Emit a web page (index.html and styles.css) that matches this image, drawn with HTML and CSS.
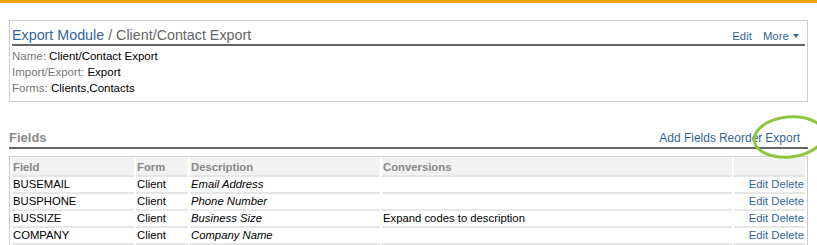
FILE: index.html
```html
<!DOCTYPE html>
<html>
<head>
    <title>Client/Contact Export</title>
    <meta charset="UTF-8">
    <link rel="stylesheet" href="styles.css">
</head>
<body>
    <div class="topbar"></div>

    <div class="panel">
        <div class="panel-head">
            <h1><a href="#">Export Module</a> / Client/Contact Export</h1>
            <div class="actions">
                <a href="#">Edit</a>
                <a href="#">More <span class="caret"></span></a>
            </div>
        </div>
        <div class="info"><span class="label">Name:</span> Client/Contact Export</div>
        <div class="info"><span class="label">Import/Export:</span> Export</div>
        <div class="info"><span class="label">Forms:</span> Clients,Contacts</div>
    </div>

    <div class="section-head">
        <h2>Fields</h2>
        <div class="actions">
            <a href="#">Add Fields</a>
            <a href="#">Reorder</a>
            <a href="#">Export</a>
        </div>
    </div>

    <table class="fields">
        <colgroup>
            <col class="c-field">
            <col class="c-form">
            <col class="c-desc">
            <col class="c-conv">
            <col class="c-act">
        </colgroup>
        <thead>
            <tr><th>Field</th><th>Form</th><th>Description</th><th>Conversions</th><th></th></tr>
        </thead>
        <tbody>
            <tr><td>BUSEMAIL</td><td>Client</td><td class="desc">Email Address</td><td></td><td class="row-links"><a href="#">Edit</a> <a href="#">Delete</a></td></tr>
            <tr><td>BUSPHONE</td><td>Client</td><td class="desc">Phone Number</td><td></td><td class="row-links"><a href="#">Edit</a> <a href="#">Delete</a></td></tr>
            <tr><td>BUSSIZE</td><td>Client</td><td class="desc">Business Size</td><td>Expand codes to description</td><td class="row-links"><a href="#">Edit</a> <a href="#">Delete</a></td></tr>
            <tr><td>COMPANY</td><td>Client</td><td class="desc">Company Name</td><td></td><td class="row-links"><a href="#">Edit</a> <a href="#">Delete</a></td></tr>
        </tbody>
    </table>

    <!-- annotation circle around the Export link -->
    <svg class="mark" width="817" height="245" viewBox="0 0 817 245">
        <ellipse cx="789" cy="137" rx="35" ry="20" transform="rotate(-6 789 137)" fill="none" stroke="#8cc63f" stroke-width="3"/>
    </svg>
</body>
</html>
```

FILE: styles.css
```css
body {
    font-family: "Liberation Sans", Arial, sans-serif;
    font-size: 11.3px;
    color: #000;
    margin: 0;
    position: relative;
}
a {
    color: #336699;
    text-decoration: none;
}
.topbar {
    height: 3px;
    background-color: #f5a300;
}
.panel {
    border: 1px solid #ccc;
    margin: 17px 9px 0 9px;
    padding: 0 2px 5px 2px;
}
.panel-head {
    display: flex;
    justify-content: space-between;
    align-items: baseline;
    border-bottom: 2px solid #666;
    padding: 5px 6px 0 0;
    margin-bottom: 2px;
}
h1 {
    font-size: 14.3px;
    font-weight: normal;
    color: #666;
    margin: 0;
    line-height: 18px;
}
.actions {
    display: flex;
    gap: 3px;
    font-size: 12px;
}
.panel-head .actions {
    gap: 11px;
    font-size: 11.4px;
}
.caret {
    display: inline-block;
    border-left: 3.5px solid transparent;
    border-right: 3.5px solid transparent;
    border-top: 4px solid #336699;
    vertical-align: 2px;
    margin-left: 1px;
}
.info {
    line-height: 16px;
    font-size: 11.5px;
}
.label {
    color: #777;
}
.section-head {
    display: flex;
    justify-content: space-between;
    align-items: baseline;
    margin: 27px 9px 0 9px;
    border-bottom: 2px solid #666;
    padding-right: 8px;
}
h2 {
    font-size: 13px;
    color: #888;
    margin: 0;
    line-height: 18px;
}
.fields {
    margin: 7px 0 0 9px;
    width: 799px;
    table-layout: fixed;
    border: 1px solid #ccc;
    border-spacing: 2px 0;
}
.c-field { width: 122px; }
.c-form { width: 52px; }
.c-desc { width: 190px; }
.c-conv { width: 350px; }
.c-act { width: 71px; }
th, td {
    text-align: left;
    padding: 0 1px;
    line-height: 15px;
    border-bottom: 2px solid #e6e6e6;
    white-space: nowrap;
    overflow: hidden;
}
th {
    background-color: #f2f2f2;
    color: #888;
    padding-top: 2px;
    border-top: 1px solid #fff;
}
.desc {
    font-style: italic;
}
.row-links {
    text-align: right;
}
.mark {
    position: absolute;
    left: 0;
    top: 0;
    pointer-events: none;
}
```
